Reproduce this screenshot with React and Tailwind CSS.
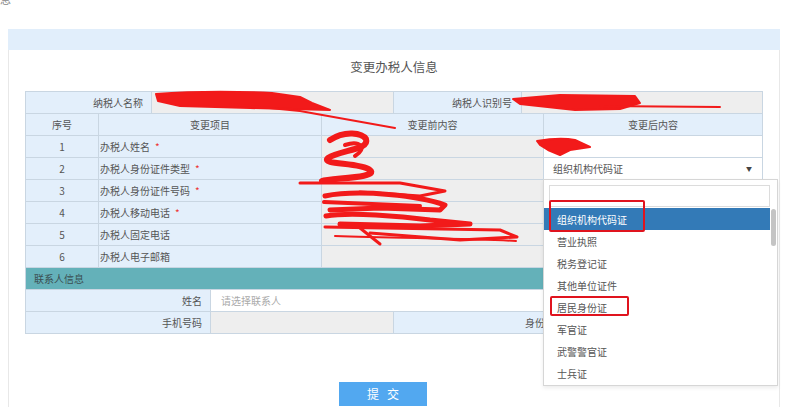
import React from 'react';

const FONT = { fontFamily: '"Noto Sans CJK SC", "Noto Sans", sans-serif' };

const Cell = ({ w, className = '', children }) => (
  <div className={`h-full shrink-0 border-r border-[#c9d6e2] flex items-center text-[10px] text-[#555] ${w} ${className}`}>
    {children}
  </div>
);

const Row = ({ children, className = '' }) => (
  <div className={`flex h-[22px] border-b border-[#c9d6e2] ${className}`}>{children}</div>
);

const Star = () => <span className="ml-[5px] text-[#e33] text-[10px]">*</span>;

const items = [
  ['1', '办税人姓名', true],
  ['2', '办税人身份证件类型', true],
  ['3', '办税人身份证件号码', true],
  ['4', '办税人移动电话', true],
  ['5', '办税人固定电话', false],
  ['6', '办税人电子邮箱', false],
];

const options = ['组织机构代码证', '营业执照', '税务登记证', '其他单位证件', '居民身份证', '军官证', '武警警官证', '士兵证'];

export default function App() {
  return (
    <div className="relative w-[800px] h-[407px] overflow-hidden bg-white" style={FONT}>
      {/* cut-off heading */}
      <div className="h-[29px]">
        <div className="-translate-y-[8px] text-[11px] text-[#888] leading-[14px]">息</div>
      </div>

      <div className="ml-[8px] w-[772px]">
        <div className="h-[21px] bg-[#e1eefb]" />
        <div className="border-x border-[#e8e8e8] px-[16px] h-[400px]">
          <div className="h-[41px] pt-[8px] text-center text-[12.5px] leading-[18px] text-[#555]">变更办税人信息</div>

          {/* TABLE */}
          <div className="w-[738px] border-t border-l border-[#c9d6e2]">
            <Row>
              <Cell w="w-[126px]" className="bg-[#e3effb] justify-end pr-[8px]">纳税人名称</Cell>
              <Cell w="w-[242px]" className="bg-[#eeeeee]" />
              <Cell w="w-[128px]" className="bg-[#e3effb] justify-end pr-[9px]">纳税人识别号</Cell>
              <Cell w="w-[241px]" className="bg-[#eeeeee]" />
            </Row>
            <Row className="bg-[#e3effb]">
              <Cell w="w-[73px]" className="justify-center">序号</Cell>
              <Cell w="w-[223px]" className="justify-center">变更项目</Cell>
              <Cell w="w-[222px]" className="justify-center">变更前内容</Cell>
              <Cell w="w-[219px]" className="justify-center">变更后内容</Cell>
            </Row>
            {items.map(([n, label, req], i) => (
              <Row key={n}>
                <Cell w="w-[73px]" className="bg-[#e3effb] justify-center">{n}</Cell>
                <Cell w="w-[223px]" className="bg-[#e3effb] pl-[1px]">
                  {label}
                  {req && <Star />}
                </Cell>
                <Cell w="w-[222px]" className="bg-[#eeeeee]" />
                <Cell w="w-[219px]" className="bg-white">
                  {i === 1 && (
                    <div className="flex w-full items-center justify-between pl-[9px] pr-[10px]">
                      <span>组织机构代码证</span>
                      <span className="text-[6px] text-[#444]">▼</span>
                    </div>
                  )}
                </Cell>
              </Row>
            ))}
            <Row className="bg-[#64b1b9] border-[#5aa5ad]">
              <div className="flex items-center pl-[8px] text-[10px] text-[#3b4f52]">联系人信息</div>
            </Row>
            <Row>
              <Cell w="w-[185px]" className="bg-[#e3effb] justify-end pr-[8px]">姓名</Cell>
              <Cell w="w-[552px]" className="bg-white pl-[10px] text-[#aaa]">请选择联系人</Cell>
            </Row>
            <Row>
              <Cell w="w-[185px]" className="bg-[#e3effb] justify-end pr-[8px]">手机号码</Cell>
              <Cell w="w-[183px]" className="bg-[#eeeeee]" />
              <Cell w="w-[211px]" className="bg-[#e3effb] pl-[131px]">身份</Cell>
              <Cell w="w-[158px]" className="bg-[#eeeeee]" />
            </Row>
          </div>

          <div className="mt-[46px] pl-[314px]">
            <button className="w-[88px] h-[24px] bg-[#52a8f0] text-white text-[12px] tracking-[8px] pl-[8px]">提交</button>
          </div>
        </div>
      </div>

      {/* redaction scribbles */}
      <svg className="absolute inset-0 pointer-events-none" width="800" height="407" viewBox="0 0 800 407">
        <g fill="#f21a1a" stroke="#f21a1a" strokeLinecap="round" strokeLinejoin="round">
          <path d="M156 94 Q210 90 272 93 L300 97 L312 103 L330 110 L250 108 L180 106 L158 101 Z" strokeWidth="2" />
          <path d="M513 99 L560 95 L635 96 L640 103 L620 109 L575 110 L520 104 Z" strokeWidth="2" />
          <path d="M537 141 Q560 137 575 140 L590 147 L570 150 L560 155 L548 150 L540 145 Z" strokeWidth="2" />
        </g>
        <g fill="none" stroke="#f21a1a" strokeLinecap="round" strokeLinejoin="round">
          <path d="M230 104 L300 111 L395 128" strokeWidth="2" />
          <path d="M600 106 L720 107" strokeWidth="2" />
          <path d="M330 140 C345 130 362 133 366 139 C370 150 340 150 328 158 C320 165 360 162 370 170 C380 178 330 178 322 181" strokeWidth="6" />
          <path d="M345 145 C360 140 368 148 355 156" strokeWidth="4" />
          <path d="M300 183 L400 183 L445 191 L420 196 L360 192" strokeWidth="3" />
          <path d="M325 196 C360 189 420 196 445 205 L440 210 L380 208 L330 210" strokeWidth="5" />
          <path d="M324 202 L420 206" strokeWidth="4" />
          <path d="M326 216 C350 212 400 216 430 220 L470 224 L420 226 L340 224" strokeWidth="5" />
          <path d="M325 227 L500 230 L517 237 L460 240 L370 233" strokeWidth="3" />
          <path d="M335 236 C400 238 480 239 516 241" strokeWidth="2" />
          <path d="M360 228 L380 244" strokeWidth="3" />
        </g>
      </svg>

      {/* DROPDOWN */}
      <div className="absolute left-[543px] top-[179px] w-[235px] h-[207px] bg-white border border-[#d6d6d6] shadow-[0_2px_4px_rgba(0,0,0,0.08)]">
        <div className="px-[5px] pt-[5px] pb-[1px]">
          <div className="h-[22px] w-[221px] border border-[#dcdcdc]" />
        </div>
        <div className="relative">
          {options.map((o, i) => (
            <div
              key={o}
              className={`h-[22px] w-[226px] pl-[13px] flex items-center text-[10px] ${i === 0 ? 'bg-[#337ab7] text-white' : 'text-[#555]'}`}
            >
              {o}
            </div>
          ))}
          <div className="absolute left-[227px] top-[1px] w-[5px] h-[37px] rounded-full bg-[#c4c4c4]" />
        </div>
      </div>

      {/* annotation boxes */}
      <div className="absolute left-[549px] top-[200px] w-[96px] h-[32px] border-2 border-[#e0141e] rounded-[2px]" />
      <div className="absolute left-[550px] top-[296px] w-[79px] h-[20px] border-2 border-[#e0141e] rounded-[2px]" />
    </div>
  );
}
